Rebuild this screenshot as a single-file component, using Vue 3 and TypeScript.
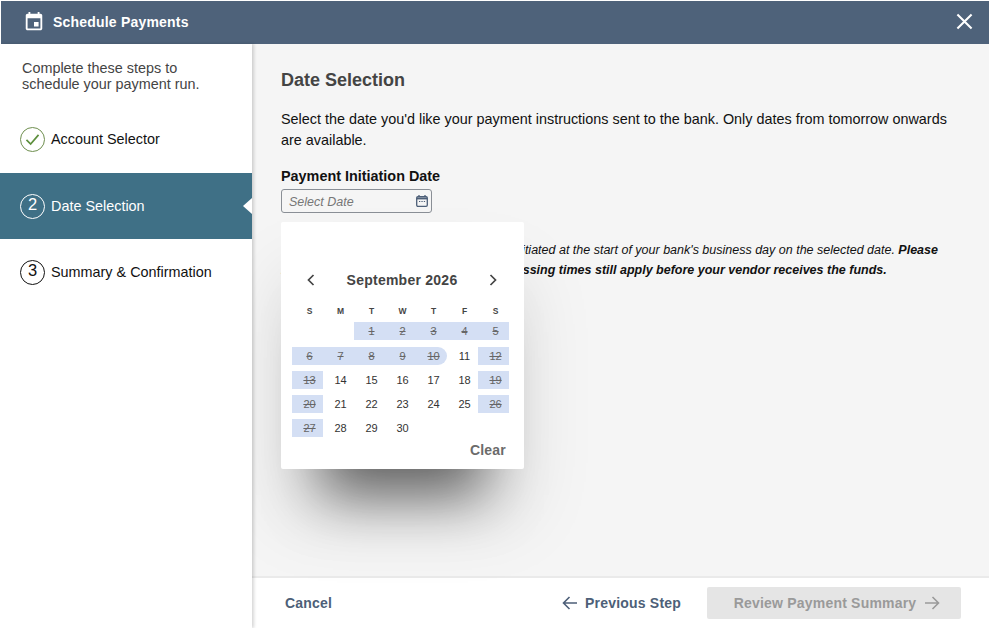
<script setup lang="ts">
interface Day { n: number; cls: string }
const heads = ['S', 'M', 'T', 'W', 'T', 'F', 'S'];
const blocked: Record<number, string> = {
  1: 'off', 2: 'off', 3: 'off', 4: 'off', 5: 'off',
  6: 'off', 7: 'off', 8: 'off', 9: 'off', 10: 'off end',
  12: 'off', 13: 'off', 19: 'off', 20: 'off', 26: 'off', 27: 'off',
};
const days: Day[] = Array.from({ length: 30 }, (_, i) => ({ n: i + 1, cls: blocked[i + 1] ?? '' }));
const steps = [
  { label: 'Account Selector', kind: 'done', mark: '' },
  { label: 'Date Selection', kind: 'active', mark: '2' },
  { label: 'Summary & Confirmation', kind: 'todo', mark: '3' },
];
</script>

<template>
  <div class="app">
    <header class="top">
      <svg class="event" viewBox="0 0 24 24" width="22" height="22"><path fill="#fff" d="M17 12h-5v5h5v-5zM16 1v2H8V1H6v2H5c-1.11 0-1.99.9-1.99 2L3 19c0 1.1.89 2 2 2h14c1.1 0 2-.9 2-2V5c0-1.1-.9-2-2-2h-1V1h-2zm3 18H5V8h14v11z"/></svg>
      <span class="title">Schedule Payments</span>
      <svg class="close" viewBox="0 0 18 18" width="17" height="17"><path d="M1.5 1.5l15 15M16.5 1.5l-15 15" stroke="#fff" stroke-width="2.2" fill="none"/></svg>
    </header>
    <div class="body">
      <aside class="side">
        <p class="intro">Complete these steps to<br>schedule your payment run.</p>
        <ul class="steps">
          <li v-for="s in steps" :key="s.label" class="step" :class="s.kind">
            <span class="badge">
              <svg v-if="s.kind === 'done'" viewBox="0 0 16 14" width="15" height="13"><path d="M1.5 7.5l4.5 4.5L14.5 2" stroke="#5d8f3c" stroke-width="1.8" fill="none"/></svg>
              <span v-else class="mark">{{ s.mark }}</span>
            </span>
            <span>{{ s.label }}</span>
          </li>
        </ul>
      </aside>
      <main class="main">
        <section class="content">
          <h1>Date Selection</h1>
          <p class="lead">Select the date you'd like your payment instructions sent to the bank. Only dates from tomorrow onwards are available.</p>
          <label class="field-label">Payment Initiation Date</label>
          <div class="input">
            <span>Select Date</span>
            <svg viewBox="0 0 14 14" width="14" height="14"><rect x="1.7" y="2.7" width="10.6" height="9.6" rx="1.2" fill="none" stroke="#4d5f78" stroke-width="1.3"/><path d="M1.7 3.4h10.6v2H1.7z" fill="#4d5f78"/><path d="M4 1v2M10 1v2" stroke="#4d5f78" stroke-width="1.3"/><path d="M4 7.5h1.3M6.4 7.5h1.3M8.8 7.5h1.3" stroke="#4d5f78" stroke-width="1"/></svg>
          </div>
          <p class="note">Your scheduled payment transfers will be initiated at the start of your bank's business day on the selected date. <b>Please note that general bank and vendor processing times still apply before your vendor receives the funds.</b></p>
          <div class="pop">
            <div class="cal-head">
              <svg viewBox="0 0 10 14" width="10" height="14"><path d="M7.5 2L2.5 7l5 5" stroke="#444" stroke-width="1.7" fill="none"/></svg>
              <span>September 2026</span>
              <svg viewBox="0 0 10 14" width="10" height="14"><path d="M2.5 2l5 5-5 5" stroke="#444" stroke-width="1.7" fill="none"/></svg>
            </div>
            <div class="dow"><span v-for="(h, i) in heads" :key="i">{{ h }}</span></div>
            <div class="grid">
              <span v-for="d in days" :key="d.n" class="day" :class="d.cls"><i>{{ d.n }}</i></span>
            </div>
            <div class="clear">Clear</div>
          </div>
        </section>
        <footer class="foot">
          <span class="cancel">Cancel</span>
          <span class="prev">
            <svg viewBox="0 0 16 14" width="16" height="14"><path d="M15 7H1.5M7.5 1l-6 6 6 6" stroke="#4d5f78" stroke-width="1.6" fill="none"/></svg>
            Previous Step
          </span>
          <span class="next">
            Review Payment Summary
            <svg viewBox="0 0 16 14" width="16" height="14"><path d="M1 7h13.5M8.5 1l6 6-6 6" stroke="#9a9a9a" stroke-width="1.6" fill="none"/></svg>
          </span>
        </footer>
      </main>
    </div>
  </div>
</template>

<style>
html, body { margin: 0; background: #fff; }
</style>

<style scoped>
.app {
  width: 989px;
  height: 628px;
  display: flex;
  flex-direction: column;
  overflow: hidden;
  font-family: "Liberation Sans", Arial, sans-serif;
  background: #fff;
  box-sizing: border-box;
  padding: 1px 0 0 1px;
}
.top {
  flex: 0 0 43px;
  box-sizing: border-box;
  display: flex;
  align-items: center;
  background: #4e627a;
  color: #fff;
  padding: 0 16px 2px 22px;
}
.event { margin-right: 8px; }
.title { font-size: 14px; font-weight: 700; letter-spacing: 0.2px; }
.close { margin-left: auto; }
.body { flex: 1; display: flex; min-height: 0; margin-left: -1px; }
.side { flex: 0 0 252px; background: #fff; position: relative; z-index: 1; box-shadow: 2px 0 3px rgba(0,0,0,.16); }
.intro { margin: 16px 0 0 22px; font-size: 14.4px; line-height: 16px; color: #444; }
.steps { list-style: none; margin: 15px 0 0; padding: 0; }
.step {
  height: 66px;
  box-sizing: border-box;
  display: flex;
  align-items: center;
  padding-left: 20px;
  gap: 6px;
  font-size: 14.4px;
  color: #111;
  position: relative;
}
.step.done { padding-bottom: 2px; }
.badge {
  width: 23px;
  height: 23px;
  border: 1px solid #111;
  border-radius: 50%;
  display: flex;
  align-items: center;
  justify-content: center;
  font-size: 16.5px;
  flex: none;
}
.mark { margin-bottom: 3px; }
.step.done .badge { border-color: #6f8f4f; }
.step.active { background: #3f7086; color: #fff; }
.step.active .badge { border-color: #fff; }
.step.active::after {
  content: "";
  position: absolute;
  right: 0;
  top: 50%;
  margin-top: -8px;
  border: 8px solid transparent;
  border-right-color: #fff;
  border-left-width: 0;
  border-right-width: 9px;
}
.main { flex: 1; display: flex; flex-direction: column; min-width: 0; background: #f5f5f5; }
.content { flex: 1; position: relative; padding: 26px 28px 0 29px; }
h1 { margin: 0; font-size: 18px; line-height: 20px; font-weight: 700; color: #444; }
.lead { margin: 19px 0 0; font-size: 14.4px; line-height: 21px; color: #111; }
.field-label { display: block; margin-top: 16px; font-size: 14.4px; line-height: 18px; font-weight: 700; color: #111; }
.input {
  box-sizing: border-box;
  width: 151px;
  height: 24px;
  margin-top: 4px;
  border: 1px solid #8a8f96;
  border-radius: 3px;
  display: flex;
  align-items: center;
  justify-content: space-between;
  padding: 1px 2px 0 7px;
  font-size: 12.5px;
  font-style: italic;
  color: #777;
}
.input svg { margin-top: -1px; }
.note { margin: 27px 0 0; font-size: 12.5px; line-height: 20px; font-style: italic; color: #111; }
.pop {
  position: absolute;
  left: 29px;
  top: 178px;
  width: 243px;
  height: 247px;
  box-sizing: border-box;
  background: #fff;
  border-radius: 2px;
  padding: 0 11px;
  box-shadow: 0 68px 56px -42px rgba(0,0,0,.55), 0 50px 70px -5px rgba(0,0,0,.13);
}
.cal-head {
  height: 18px;
  margin: 49px 0 0;
  display: flex;
  align-items: center;
  justify-content: space-between;
  padding: 0 15px 0 14px;
  font-size: 14px;
  font-weight: 700;
  letter-spacing: .25px;
  color: #444;
}
.dow { display: grid; grid-template-columns: repeat(7, 1fr); width: 217px; margin-top: 16px; font-size: 8.5px; font-weight: 700; color: #444; text-align: center; line-height: 12px; }
.dow span { padding-left: 4px; }
.grid { display: grid; grid-template-columns: repeat(7, 1fr); grid-template-rows: 19px; width: 217px; margin-top: 5px; row-gap: 6px; grid-auto-rows: 18px; }
.grid .day:first-child { grid-column-start: 3; }
.day { height: 18px; display: flex; align-items: center; justify-content: center; padding-left: 4px; font-size: 11px; color: #333; }
.day i { font-style: normal; }
.off { background: #d4dff4; color: #666; }
.off i { text-decoration: line-through; }
.off.end { border-radius: 0 9px 9px 0; }
.clear { margin: 5px 7px 0 0; text-align: right; font-size: 14px; font-weight: 700; color: #6b6b6b; letter-spacing: .2px; }
.foot {
  flex: 0 0 52px;
  box-sizing: border-box;
  background: #fff;
  border-top: 2px solid #eaeaea;
  display: flex;
  align-items: center;
  padding: 0 28px 1px 33px;
  font-size: 14px;
  font-weight: 700;
  letter-spacing: .2px;
  color: #4d5f78;
}
.cancel { margin-right: auto; }
.prev { display: flex; align-items: center; gap: 7px; margin-right: 26px; }
.next {
  width: 254px;
  height: 32px;
  box-sizing: border-box;
  background: #e5e5e5;
  border-radius: 2px;
  color: #9a9a9a;
  display: flex;
  align-items: center;
  justify-content: center;
  gap: 8px;
  padding-left: 6px;
}
</style>
